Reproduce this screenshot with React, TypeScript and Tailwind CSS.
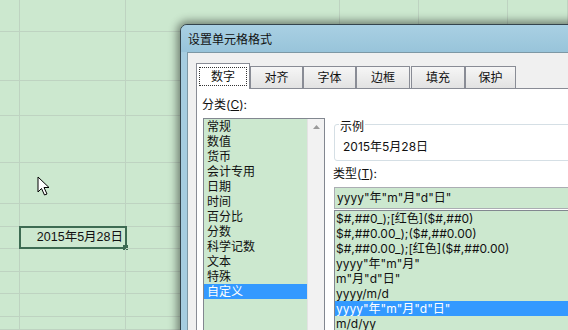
import React from 'react';

const FONT = "font-['Inter','Noto_Sans_CJK_SC',sans-serif]";

const rowCount = 11;
const colCount = 7;

const categories = ['常规', '数值', '货币', '会计专用', '日期', '时间', '百分比', '分数', '科学记数', '文本', '特殊', '自定义'];

const formats = [
  '$#,##0_);[红色]($#,##0)',
  '$#,##0.00_);($#,##0.00)',
  '$#,##0.00_);[红色]($#,##0.00)',
  'yyyy"年"m"月"',
  'm"月"d"日"',
  'yyyy/m/d',
  'yyyy"年"m"月"d"日"',
  'm/d/yy',
];

const tabs = [
  { label: '数字', w: 'w-[54px]' },
  { label: '对齐', w: 'w-[53px]' },
  { label: '字体', w: 'w-[53px]' },
  { label: '边框', w: 'w-[54px]' },
  { label: '填充', w: 'w-[54px] ml-px' },
  { label: '保护', w: 'w-[51px]' },
];

const Sheet = () => {
  const cells = [];
  for (let r = 0; r < rowCount; r++) {
    for (let c = 0; c < colCount; c++) {
      const active = r === 6 && c === 1;
      cells.push(
        <div key={`${r}-${c}`} className="relative border-r border-b border-[#bed3c1]">
          {active && (
            <div className="absolute -left-px -top-[1px] w-[108px] h-[23px] border-2 border-[#3d6b52] flex items-center justify-end pr-[2px]">
              <span className="text-[12.5px] leading-none text-[#111] font-['Liberation_Sans','Noto_Sans_CJK_SC',sans-serif]">2015年5月28日</span>
              <div className="absolute -right-[3px] -bottom-[3px] w-[5px] h-[5px] bg-[#3d6b52]" />
            </div>
          )}
        </div>
      );
    }
  }
  return (
    <div className="grid w-[568px] h-[330px] bg-[#cce8cf] grid-cols-[20px_106px_214px_79px_89px_1fr] grid-rows-[32px_49px_35px_47px_41px_23px_22px_23px_22px_23px_1fr]">
      {cells.filter((_, i) => i % colCount < 6)}
    </div>
  );
};

const Cursor = () => (
  <svg className="absolute left-[37px] top-[176px]" width="14" height="21" viewBox="0 0 14 21">
    <path d="M1 1 L1 16 L4.5 12.5 L7.5 19 L10 18 L7 11.5 L12 11.5 Z" fill="#fff" stroke="#000" strokeWidth="1" strokeLinejoin="miter" />
  </svg>
);

const Dialog = () => (
  <div className={`absolute left-[180px] top-[24px] w-[420px] h-[330px] rounded-tl-[7px] border border-[#34444c] bg-[#a6cde0] shadow-[0_0_9px_3px_rgba(0,0,0,0.45)] flex flex-col ${FONT}`}>
    <div className="h-[27px] flex items-center pl-[7px] pt-[2px] text-[12px] text-[#111] bg-gradient-to-b from-[#a9d0e3] to-[#98c4da] rounded-tl-[6px]">
      设置单元格格式
    </div>
    <div className="flex-1 ml-[6px] border-l border-t border-[#7d98a5] bg-[#f0f0f0] pt-[9px] pl-[8px] flex flex-col">
      <div className="flex items-end h-[26px]">
        {tabs.map((t, i) =>
          i === 0 ? (
            <div key={t.label} className={`${t.w} h-[26px] relative z-10 -mb-px bg-white border border-b-0 border-[#898c95] pt-[3px] px-[2px]`}>
              <div className="h-[19px] border border-dotted border-[#333] flex items-center justify-center text-[12px] text-[#111]">
                {t.label}
              </div>
            </div>
          ) : (
            <div
              key={t.label}
              className={`${t.w} h-[22px] border border-b-0 border-[#898c95] bg-gradient-to-b from-[#f6f6f6] to-[#e2e2e2] flex items-center justify-center text-[12px] text-[#111]`}
            >
              {t.label}
            </div>
          )
        )}
      </div>
      <div className="flex-1 bg-white border border-[#898c95] flex">
        <div className="w-[136px] pl-[5px] pt-[8px] flex flex-col">
          <div className="text-[12px] leading-[15px] text-[#111]">
            分类(<span className="underline">C</span>):
          </div>
          <div className="mt-[6px] ml-px w-[122px] flex-1 border border-[#828790] flex">
            <div className="flex-1 bg-[#cce8cf] flex flex-col">
              {categories.map((c) => (
                <div
                  key={c}
                  className={`h-[15px] leading-[15px] pl-[3px] text-[12px] ${c === '自定义' ? 'bg-[#3399ff] text-white' : 'text-[#111]'}`}
                >
                  {c}
                </div>
              ))}
            </div>
            <div className="w-[17px] bg-[#f2f2f2] border-l border-[#e3e3e3] flex justify-center pt-[6px]">
              <svg width="7" height="4" viewBox="0 0 7 4">
                <path d="M0 4 L3.5 0 L7 4 Z" fill="#9a9a9a" />
              </svg>
            </div>
          </div>
        </div>
        <div className="flex-1 flex flex-col">
          <div className="relative mt-[35px] ml-px h-[37px] border border-[#d5dfe5] rounded-[3px] pt-[14px] pl-[8px]">
            <span className="absolute -top-[6px] left-[4px] bg-white px-[1px] text-[12px] leading-[15px] text-[#111]">示例</span>
            <div className="text-[12px] leading-[15px] text-[#111]">2015年5月28日</div>
          </div>
          <div className="mt-[5px] text-[12px] leading-[15px] text-[#111]">
            类型(<span className="underline">T</span>):
          </div>
          <div className="mt-[6px] ml-px h-[22px] border border-[#abadb3] bg-[#cce8cf] flex items-center pl-[2px] text-[12px] text-[#111]">
            yyyy"年"m"月"d"日"
          </div>
          <div className="mt-px ml-px flex-1 border border-[#828790] bg-[#cce8cf] flex flex-col">
            {formats.map((f, i) => (
              <div
                key={f}
                className={`h-[15px] leading-[15px] pl-px text-[12px] ${i === 6 ? 'bg-[#3399ff] text-white' : 'text-[#111]'}`}
              >
                {f}
              </div>
            ))}
          </div>
        </div>
      </div>
    </div>
  </div>
);

export default function App() {
  return (
    <div className="relative w-[568px] h-[330px] overflow-hidden">
      <Sheet />
      <Cursor />
      <Dialog />
    </div>
  );
}
